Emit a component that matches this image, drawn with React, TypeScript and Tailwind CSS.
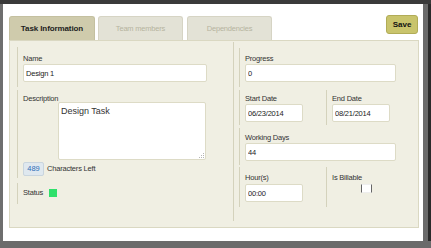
const font = "font-['Liberation_Sans',Arial,sans-serif]";

type FieldProps = {
  value: string;
  className?: string;
};

const Field = ({ value, className = "" }: FieldProps) => (
  <input
    readOnly
    value={value}
    className={`block h-[18px] rounded-[2px] border border-[#dddbc6] bg-white px-[2px] text-[7.5px] tracking-[-0.2px] text-[#222] outline-none ${className}`}
  />
);

const Label = ({ children }: { children: React.ReactNode }) => (
  <div className="h-[10px] text-[7.5px] leading-[10px] tracking-[-0.2px] text-[#333]">{children}</div>
);

export default function App() {
  return (
    <div className={`flex h-[248px] w-[431px] flex-col bg-[#6b6b6b] ${font}`}>
      <div className="h-[4px] w-full bg-[#3a3a3a]" />
      <div className="flex h-[237px]">
        <div className="w-[3px] bg-[#6e6e6e]" />

        {/* Dialog */}
        <div className="flex w-[420px] flex-col bg-white">
          {/* Tabs + save */}
          <div className="flex h-[36px] items-end pl-[6px] pr-[5px]">
            <div className="flex h-[24px] w-[86px] items-center justify-center rounded-t-[3px] border border-b-0 border-[#c4c0a0] bg-[#cfcbac] text-[8px] font-bold tracking-[-0.1px] text-[#1e1e1e]">
              Task Information
            </div>
            <div className="ml-[3px] flex h-[24px] w-[85px] items-center justify-center rounded-t-[3px] border border-b-0 border-[#d6d4c4] bg-[#e3e2d6] text-[7.5px] tracking-[-0.2px] text-[#b6b49f]">
              Team members
            </div>
            <div className="ml-[4px] flex h-[24px] w-[85px] items-center justify-center rounded-t-[3px] border border-b-0 border-[#d6d4c4] bg-[#e3e2d6] text-[7.5px] tracking-[-0.2px] text-[#b6b49f]">
              Dependencies
            </div>
            <div className="ml-auto mt-[11px] flex h-[19px] w-[32px] items-center justify-center self-start rounded-[3px] border border-[#b1ac57] bg-[#c9c46c] text-[8px] font-bold text-[#111]">
              Save
            </div>
          </div>

          {/* Panel */}
          <div className="ml-[6px] flex h-[188px] w-[410px] border border-[#dad8c2] bg-[#f0efe3]">
            {/* Left column */}
            <div className="mt-[1px] h-[179px] w-[224px] border-r border-[#d4d2bc] pl-[7px] pt-[5px]">
              <div className="border-l border-[#d4d2bc] pl-[5px] pt-[6px] pb-[5px]">
                <div className="h-[11px] text-[7.5px] leading-[11px] tracking-[-0.2px] text-[#333]">Name</div>
                <Field value="Design 1" className="w-[184px]" />
              </div>

              <div className="mt-[3px] border-l border-[#d4d2bc] pl-[5px] pt-[4px] pb-[2px]">
                <div className="flex items-start">
                  <div className="w-[35px]">
                    <Label>Description</Label>
                  </div>
                  <div className="relative mt-[8px]">
                    <textarea
                      readOnly
                      defaultValue="Design Task"
                      className="block h-[58px] w-[148px] resize-none rounded-[2px] border border-[#dddbc6] bg-white px-[2px] pt-[3px] text-[9px] leading-[10px] text-[#333] outline-none"
                    />
                    {/* resize grip */}
                    <div className="absolute bottom-[2px] right-[2px] flex flex-col items-end gap-[1px]">
                      <span className="h-[1px] w-[1px] bg-[#b5b5b5]" />
                      <span className="flex gap-[1px]"><span className="h-[1px] w-[1px] bg-[#b5b5b5]" /><span className="h-[1px] w-[1px] bg-[#b5b5b5]" /></span>
                      <span className="flex gap-[1px]"><span className="h-[1px] w-[1px] bg-[#b5b5b5]" /><span className="h-[1px] w-[1px] bg-[#b5b5b5]" /><span className="h-[1px] w-[1px] bg-[#b5b5b5]" /></span>
                    </div>
                  </div>
                </div>
                <div className="mt-[2px] flex h-[14px] items-center">
                  <div className="flex h-[14px] w-[21px] items-center justify-center rounded-[2px] border border-[#c9d5de] bg-[#dfe8ef] text-[7.5px] text-[#2d6db6]">
                    489
                  </div>
                  <span className="ml-[3px] text-[7.5px] tracking-[-0.2px] text-[#333]">Characters Left</span>
                </div>
              </div>

              <div className="mt-[5px] border-l border-[#d4d2bc] pl-[5px] pt-[5px] pb-[6px]">
                <div className="flex h-[10px] items-center">
                  <span className="text-[7.5px] tracking-[-0.2px] text-[#333]">Status</span>
                  <span className="ml-[6px] h-[8px] w-[8px] bg-[#2fe06b]" />
                </div>
              </div>
            </div>

            {/* Right column */}
            <div className="mt-[1px] flex-1 pl-[5px] pt-[6px]">
              <div className="border-l border-[#d4d2bc] pl-[5px] pt-[5px] pb-[5px]">
                <div className="h-[11px] text-[7.5px] leading-[11px] tracking-[-0.2px] text-[#333]">Progress</div>
                <Field value="0" className="w-[151px] border-[#d0d0c6] bg-[#dcdcdc]" />
              </div>

              <div className="mt-[3px] flex border-l border-[#d4d2bc] pl-[5px]">
                <div className="w-[81px] pt-[4px] pb-[3px]">
                  <Label>Start Date</Label>
                  <Field value="06/23/2014" className="w-[58px]" />
                </div>
                <div className="border-l border-[#d4d2bc] pl-[5px] pt-[4px] pb-[3px]">
                  <Label>End Date</Label>
                  <Field value="08/21/2014" className="w-[58px]" />
                </div>
              </div>

              <div className="mt-[3px] border-l border-[#d4d2bc] pl-[5px] pt-[5px] pb-[4px]">
                <Label>Working Days</Label>
                <Field value="44" className="w-[151px]" />
              </div>

              <div className="mt-[2px] flex border-l border-[#d4d2bc] pl-[5px]">
                <div className="w-[81px] pt-[6px] pb-[5px]">
                  <Label>Hour(s)</Label>
                  <Field value="00:00" className="mt-[1px] w-[58px]" />
                </div>
                <div className="border-l border-[#d4d2bc] pl-[5px] pt-[6px] pb-[5px]">
                  <Label>Is Billable</Label>
                  <div className="ml-[29px] mt-[1px] h-[9px] w-[11px] border-x border-y border-x-[#666] border-y-[#eeeeee] bg-white" />
                </div>
              </div>
            </div>
          </div>
        </div>

        <div className="w-[5px] bg-[#6a6a6a]" />
        <div className="w-[3px] bg-[#2a2a2a]" />
      </div>
    </div>
  );
}
